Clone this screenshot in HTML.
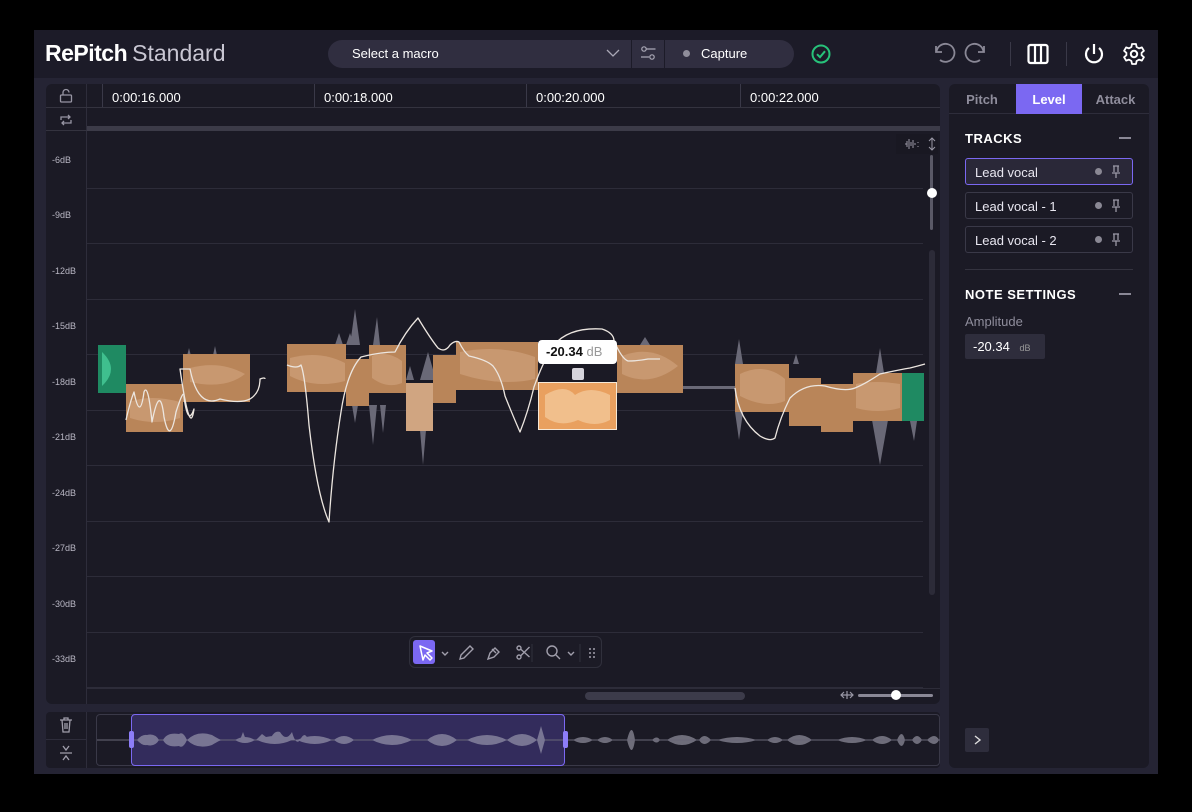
<!DOCTYPE html><html><head><meta charset="utf-8"><style>
*{margin:0;padding:0;box-sizing:border-box}
body{width:1192px;height:812px;background:#000;font-family:"Liberation Sans",sans-serif;position:relative;overflow:hidden;color:#e6e4ee}
.a{position:absolute}
.app{left:34px;top:30px;width:1124px;height:744px;background:#252434}
.t{font-size:13px;color:#fff}
.tab{top:84px;height:30px;font-size:13px;font-weight:bold;display:flex;align-items:center;justify-content:center;color:#8f8d9c}
.trk{left:965px;width:168px;height:27px;border:1px solid #3a3948;border-radius:3px;font-size:13px;color:#e8e6f0;padding:6px 9px;background:#1b1a25}
.dot{position:absolute;right:30px;top:9px;width:7px;height:7px;border-radius:50%;background:#8a8894}
.pin{position:absolute;right:11px;top:6px}
.db{left:52px;font-size:9px;color:#b9b7c4}
</style></head><body>
<div class="a app"></div>
<div class="a" style="left:34px;top:30px;width:1124px;height:48px;background:#1c1b28"></div>
<div class="a" style="left:45px;top:40px;font-size:23px;color:#fff"><b style="letter-spacing:-0.5px">RePitch</b><span style="color:#c9c7d3;font-weight:normal;margin-left:5px">Standard</span></div>
<div class="a" style="left:328px;top:40px;width:466px;height:28px;background:#302e40;border-radius:14px"></div>
<div class="a t" style="left:352px;top:46px">Select a macro</div>
<svg class="a" style="left:606px;top:47px" width="14" height="12"><path d="M1 3l6 6 6-6" stroke="#aaa8b6" fill="none" stroke-width="1.3"/></svg>
<div class="a" style="left:631px;top:40px;width:1px;height:28px;background:#1c1b28"></div>
<div class="a" style="left:664px;top:40px;width:1px;height:28px;background:#1c1b28"></div>
<svg class="a" style="left:640px;top:45px" width="17" height="17"><g stroke="#aaa8b6" fill="none" stroke-width="1.2"><circle cx="4" cy="4" r="2.2"/><path d="M6.5 4h9M1 12h8"/><circle cx="12" cy="12" r="2.2"/></g></svg>
<div class="a" style="left:683px;top:50px;width:7px;height:7px;border-radius:50%;background:#8f8d9a"></div>
<div class="a t" style="left:701px;top:46px">Capture</div>
<svg class="a" style="left:810px;top:43px" width="22" height="22"><circle cx="11" cy="11" r="8.5" stroke="#27c27a" stroke-width="2" fill="none"/><path d="M7 11.2l3 3 5-6" stroke="#27c27a" stroke-width="2" fill="none"/></svg>
<svg class="a" style="left:932px;top:41px" width="60" height="26"><g stroke="#8a8896" stroke-width="1.8" fill="none"><path d="M4 5v6h6"/><path d="M4.5 11A9 9 0 1 1 8 19"/><path d="M52 5v6h-6"/><path d="M51.5 11A9 9 0 1 0 48 19"/></g></svg>
<div class="a" style="left:1010px;top:42px;width:1px;height:24px;background:#3a3948"></div>
<svg class="a" style="left:1026px;top:42px" width="24" height="24"><rect x="2.5" y="3" width="19" height="18" rx="2" stroke="#fff" stroke-width="2.2" fill="none"/><path d="M9 3v18M15 3v18" stroke="#fff" stroke-width="2.2"/></svg>
<div class="a" style="left:1066px;top:42px;width:1px;height:24px;background:#3a3948"></div>
<svg class="a" style="left:1082px;top:42px" width="24" height="24"><path d="M12 2v10" stroke="#fff" stroke-width="2.2"/><path d="M7 6A8 8 0 1 0 17 6" stroke="#fff" stroke-width="2.2" fill="none"/></svg>
<svg class="a" style="left:1122px;top:42px" width="24" height="24"><circle cx="12" cy="12" r="3.2" stroke="#fff" stroke-width="2" fill="none"/><path d="M10 2h4l.6 3 2.4 1.4 2.9-1 2 3.4-2.3 2v2.4l2.3 2-2 3.4-2.9-1-2.4 1.4-.6 3h-4l-.6-3-2.4-1.4-2.9 1-2-3.4 2.3-2v-2.4l-2.3-2 2-3.4 2.9 1L9.4 5z" stroke="#fff" stroke-width="1.8" fill="none" stroke-linejoin="round"/></svg>

<div class="a" style="left:46px;top:84px;width:894px;height:620px;background:#1b1a25;border-radius:6px"></div>
<div class="a" style="left:86px;top:84px;width:1px;height:620px;background:#2e2d3b"></div>
<div class="a" style="left:46px;top:107px;width:894px;height:1px;background:#34333f"></div>
<div class="a" style="left:46px;top:130px;width:894px;height:1px;background:#34333f"></div>
<div class="a" style="left:87px;top:126px;width:853px;height:5px;background:#3c3b48"></div>
<svg class="a" style="left:58px;top:88px" width="16" height="16"><g stroke="#9795a3" stroke-width="1.3" fill="none"><rect x="2.5" y="7" width="11" height="7" rx="1"/><path d="M5 7V4.5a3 3 0 0 1 6 0"/></g></svg>
<svg class="a" style="left:58px;top:112px" width="16" height="16"><g stroke="#9795a3" stroke-width="1.3" fill="none"><path d="M3 8V5h9M10 3l2 2-2 2M13 8v3H4M6 13l-2-2 2-2"/></g></svg>
<div class="a" style="left:102px;top:84px;width:1px;height:23px;background:#3a3948"></div>
<div class="a" style="left:314px;top:84px;width:1px;height:23px;background:#3a3948"></div>
<div class="a" style="left:526px;top:84px;width:1px;height:23px;background:#3a3948"></div>
<div class="a" style="left:740px;top:84px;width:1px;height:23px;background:#3a3948"></div>
<div class="a t" style="left:112px;top:90px">0:00:16.000</div>
<div class="a t" style="left:324px;top:90px">0:00:18.000</div>
<div class="a t" style="left:536px;top:90px">0:00:20.000</div>
<div class="a t" style="left:750px;top:90px">0:00:22.000</div>
<div class="a db" style="top:155px">-6dB</div>
<div class="a db" style="top:210px">-9dB</div>
<div class="a db" style="top:266px">-12dB</div>
<div class="a db" style="top:321px">-15dB</div>
<div class="a db" style="top:377px">-18dB</div>
<div class="a db" style="top:432px">-21dB</div>
<div class="a db" style="top:488px">-24dB</div>
<div class="a db" style="top:543px">-27dB</div>
<div class="a db" style="top:599px">-30dB</div>
<div class="a db" style="top:654px">-33dB</div>
<svg class="a" style="left:87px;top:131px" width="853" height="573">
<g stroke="#2d2c39" stroke-width="1">
<path d="M0 57.5H836M0 112.5H836M0 168.5H836M0 223.5H836M0 279.5H836M0 334.5H836M0 390.5H836M0 445.5H836M0 501.5H836M0 556.5H836"/></g>
<g transform="translate(-87,-131)">
<g fill="#6a6977">
<path d="M186 360l3-12 3 12zM212 360l3-14 3 14z"/>
<path d="M335 345l4-12 4 12zM346 345l4-12 4 12zM350 345l5-36 5 36zM352 405l3 18 3-18zM373 345l4-28 3 28zM406 380l4-14 4 14zM420 430l3 35 3-35zM420 380l8-28 8 28z"/>
<path d="M369 405l4 40 4-40zM380 405l3 28 3-28z"/>
<path d="M735 364l4-25 4 25zM735 412l4 28 4-28z"/>
<path d="M876 373l4-25 4 25zM872 420l8 45 8-45zM910 421l4 20 3-20zM793 364l3-10 3 10z"/>
<path d="M683 386h52v3h-52z"/>
<path d="M640 345l5-8 5 8z"/>
</g>
<g fill="#b98559">
<rect x="126" y="384" width="57" height="48"/>
<rect x="183" y="354" width="67" height="48"/>
<rect x="287" y="344" width="59" height="48"/>
<rect x="346" y="359" width="23" height="47"/>
<rect x="369" y="345" width="37" height="48"/>
<rect x="433" y="355" width="23" height="48"/>
<rect x="456" y="342" width="82" height="48"/>
<rect x="617" y="345" width="66" height="48"/>
<rect x="735" y="364" width="54" height="48"/>
<rect x="789" y="378" width="32" height="48"/>
<rect x="821" y="384" width="32" height="48"/>
<rect x="853" y="373" width="49" height="48"/>
</g>
<rect x="406" y="383" width="27" height="48" fill="#d0a581"/>
<g fill="#d6a884" opacity=".55">
<path d="M130 402q20-8 50 0v16q-25 8-50 0z"/>
<path d="M190 368q30-8 55 6q-20 16-55 8z"/>
<path d="M290 358q30-8 55 5v18q-30 8-55-5z"/>
<path d="M372 356q15-6 30 5v22q-15 6-30-5z"/>
<path d="M460 352q40-8 75 5v22q-35 8-75-5z"/>
<path d="M622 356q30-12 56 10q-28 22-56 8z"/>
<path d="M740 374q25-12 45 5v22q-20 8-45-5z"/>
<path d="M856 384q20-4 44 0v24q-22 6-44 0z"/>
</g>
<rect x="98" y="345" width="28" height="48" fill="#1f8a62"/>
<path d="M102 352q18 17 0 34z" fill="#3fbf8e"/>
<rect x="902" y="373" width="22" height="48" fill="#1f8a62"/>
<rect x="538.5" y="382.5" width="78" height="47" fill="#e9a05f" stroke="#f6e8d6"/>
<path d="M545 395q20-12 30 0q15-10 35 0v25q-15 8-32 0q-18 8-33-3z" fill="#f1bf8c"/>
<rect x="572" y="368" width="12" height="12" rx="2" fill="#d6d4dc"/>
<g fill="none" stroke="#ece6e0" stroke-width="1.3" stroke-linejoin="round">
<path d="M126 420q4-18 8-28q6 30 10 0q4-10 8 30q8-40 12-5q6 30 12-5q8-25 8-15q4 30 10 12q-4 30-14-40q8 0 10 0q8 40 30 30q20 5 30 0q10-6 10-20q5-2 5 0"/>
<path d="M287 365q10 4 14 0q4 10 8 60q8 70 20 97q4-60 12-110q6-40 20-55q20-5 34-5q10-20 23-34q12 20 20 30q7 5 12-3q5-5 9-3q5 10 10 14q18 4 24 10q8 10 12 30q8 20 15 36q8-20 14-45q10-28 20-42q15-18 48-16q12 4 12 12q8 18 14 20q10 0 20-2q10 0 12 0"/>
<path d="M735 388q4 32 25 48q10 6 15 2q5-20 15-40q15-15 35-12q20 6 30 2q10-4 25-14q18-4 30-6q8-2 15-4"/>
</g>
</g>
</svg>
<div class="a" style="left:538px;top:340px;width:79px;height:24px;background:#fff;border-radius:4px;font-size:13px;color:#111;padding:4px 8px"><b>-20.34</b> <span style="color:#999">dB</span></div>
<div class="a" style="left:930px;top:155px;width:3px;height:75px;background:#5a5966;border-radius:2px"></div>
<div class="a" style="left:927px;top:188px;width:10px;height:10px;border-radius:50%;background:#fff"></div>
<div class="a" style="left:929px;top:250px;width:6px;height:345px;background:#2c2b38;border-radius:3px"></div>
<div class="a" style="left:896px;top:134px;width:42px;height:20px;background:#191822"></div>
<svg class="a" style="left:904px;top:137px" width="34" height="14"><g stroke="#9a98a6" stroke-width="1" fill="none"><path d="M1 7h2M3 4v6M5 2v10M7 5v4M9 3v8M11 6v2M14 5v1M14 9v1"/><path d="M28 1v12M25 4l3-3 3 3M25 10l3 3 3-3"/></g></svg>
<div class="a" style="left:409px;top:636px;width:193px;height:32px;background:#1c1b26;border:1px solid #30303c;border-radius:6px"></div>
<div class="a" style="left:413px;top:640px;width:22px;height:24px;background:#7b68f2;border-radius:3px"></div>
<svg class="a" style="left:415px;top:642px" width="185" height="22"><g stroke="#fff" stroke-width="1.5" fill="none"><path d="M5 4l12 5-5 2 5 5-2 2-5-5-2 5z" stroke-linejoin="round"/></g>
<g stroke="#a09eab" stroke-width="1.4" fill="none"><path d="M27 10l3 3 3-3"/><path d="M45 17l1-4 9-9 3 3-9 9z"/><path d="M73 17l2-6 5-5 4 4-5 5z M77 7l4 4"/><circle cx="104" cy="15" r="2"/><circle cx="104" cy="6" r="2"/><path d="M105.5 7l9 8M105.5 14l9-9"/><circle cx="137" cy="9" r="5"/><path d="M141 13l4 4M153 10l3 3 3-3"/></g>
<path d="M117 2v18M165 2v18" stroke="#30303c"/><g fill="#a09eab"><circle cx="175" cy="7" r="1"/><circle cx="179" cy="7" r="1"/><circle cx="175" cy="11" r="1"/><circle cx="179" cy="11" r="1"/><circle cx="175" cy="15" r="1"/><circle cx="179" cy="15" r="1"/></g></svg>
<div class="a" style="left:86px;top:688px;width:854px;height:1px;background:#2d2c39"></div>
<div class="a" style="left:585px;top:692px;width:160px;height:8px;background:#3c3b4a;border-radius:4px"></div>
<svg class="a" style="left:840px;top:690px" width="14" height="10"><g stroke="#9a98a6" stroke-width="1.2" fill="none"><path d="M1 5h12M4 2L1 5l3 3M10 2l3 3-3 3M7 1v8"/></g></svg>
<div class="a" style="left:858px;top:694px;width:75px;height:3px;background:#8a8896;border-radius:2px"></div>
<div class="a" style="left:891px;top:690px;width:10px;height:10px;border-radius:50%;background:#fff"></div>
<div class="a" style="left:46px;top:712px;width:894px;height:56px;background:#1b1a25;border-radius:4px"></div>
<div class="a" style="left:86px;top:712px;width:1px;height:56px;background:#2e2d3b"></div>
<div class="a" style="left:46px;top:739px;width:40px;height:1px;background:#2e2d3b"></div>
<div class="a" style="left:96px;top:714px;width:844px;height:52px;border:1px solid #3a3948;border-radius:4px"></div>
<svg class="a" style="left:59px;top:717px" width="14" height="16"><g stroke="#a09eab" stroke-width="1.3" fill="none"><path d="M1 3h12M5 3V1h4v2M3 3l1 12h6l1-12M6 6v6M8 6v6"/></g></svg>
<svg class="a" style="left:59px;top:745px" width="14" height="16"><g stroke="#a09eab" stroke-width="1.3" fill="none"><path d="M1 8h12M4 1l3 4 3-4M4 15l3-4 3 4"/></g></svg>
<div class="a" style="left:131px;top:714px;width:434px;height:52px;background:#332c5c;border:1.5px solid #7b68f2;border-radius:4px"></div>
<svg class="a" style="left:97px;top:720px" width="843" height="40"><path d="M0 20H843" stroke="#6a6878"/><g fill="#787593">
<path d="M40 20q5-6 10-5q8-2 12 5q-4 7-12 5q-5 1-10-5zM66 20q4-8 16-6q4-3 8 6q-4 9-8 6q-12 2-16-6zM90 20q10-10 25-5q8 5 10 5q-2 0-10 5q-15 5-25-5z"/>
<path d="M138 20h5l3-8 3 8h10l6-6 8 6q4-10 10-8q6 10 12 0q4 14 8 8q5-10 8 0"/>
<path d="M138 20q10-6 20 0q-10 6-20 0zM160 20q18-8 35 0q-17 8-35 0zM200 20q18-8 35 0q-17 8-35 0zM237 20q10-8 20 0q-10 8-20 0zM275 20q20-10 40 0q-20 10-40 0zM330 20q15-12 30 0q-15 12-30 0zM370 20q20-10 40 0q-20 10-40 0zM410 20q15-12 30 0q-15 12-30 0zM440 20l4-14 4 14-4 14z"/></g>
<g fill="#6e6d7a"><path d="M476 20q10-6 20 0q-10 6-20 0zM500 20q8-6 16 0q-8 6-16 0zM530 20q5-20 8 0q-3 20-8 0zM548 20h22M555 20q5-5 8 0q-3 5-8 0zM570 20q15-10 30 0q-15 10-30 0zM602 20q5-8 12 0q-7 8-12 0zM620 20q20-6 40 0q-20 6-40 0zM670 20q8-6 16 0q-8 6-16 0zM690 20q12-10 25 0q-13 10-25 0zM740 20q15-6 30 0q-15 6-30 0zM775 20q10-8 20 0q-10 8-20 0zM800 20q5-12 8 0q-3 12-8 0zM815 20q5-8 10 0q-5 8-10 0zM830 20q8-8 12 0q-4 8-12 0z"/></g><path d="M470 20H843" stroke="#6a6878"/></svg>
<div class="a" style="left:129px;top:731px;width:5px;height:17px;background:#8d7df8;border-radius:2px"></div>
<div class="a" style="left:563px;top:731px;width:5px;height:17px;background:#8d7df8;border-radius:2px"></div>
<div class="a" style="left:949px;top:84px;width:200px;height:684px;background:#1b1a25;border-radius:6px"></div>
<div class="a" style="left:949px;top:113px;width:200px;height:1px;background:#2e2d3b"></div>
<div class="a tab" style="left:949px;width:66px">Pitch</div>
<div class="a tab" style="left:1016px;width:66px;background:#7b68f2;color:#fff">Level</div>
<div class="a tab" style="left:1082px;width:67px">Attack</div>
<div class="a" style="left:965px;top:131px;font-size:13px;font-weight:bold;letter-spacing:.5px;color:#fff">TRACKS</div>
<div class="a" style="left:1119px;top:137px;width:12px;height:1.5px;background:#8a8896"></div>
<div class="a trk" style="top:158px;border-color:#7b68f2;background:#2a2838">Lead vocal<span class="dot"></span><svg class="pin" width="10" height="14"><path d="M2 1h6M3 1v6M7 1v6M1 8h8M5 8v5" stroke="#9b99a6" stroke-width="1.3" fill="none"/></svg></div>
<div class="a trk" style="top:192px">Lead vocal - 1<span class="dot"></span><svg class="pin" width="10" height="14"><path d="M2 1h6M3 1v6M7 1v6M1 8h8M5 8v5" stroke="#9b99a6" stroke-width="1.3" fill="none"/></svg></div>
<div class="a trk" style="top:226px">Lead vocal - 2<span class="dot"></span><svg class="pin" width="10" height="14"><path d="M2 1h6M3 1v6M7 1v6M1 8h8M5 8v5" stroke="#9b99a6" stroke-width="1.3" fill="none"/></svg></div>
<div class="a" style="left:965px;top:269px;width:168px;height:1px;background:#34333f"></div>
<div class="a" style="left:965px;top:287px;font-size:13px;font-weight:bold;letter-spacing:.5px;color:#fff">NOTE SETTINGS</div>
<div class="a" style="left:1119px;top:293px;width:12px;height:1.5px;background:#8a8896"></div>
<div class="a" style="left:965px;top:314px;font-size:13px;color:#8f8d9c">Amplitude</div>
<div class="a" style="left:965px;top:334px;width:80px;height:25px;background:#2e2d3c;border-radius:2px;font-size:13px;color:#fff;padding:5px 8px">-20.34 <span style="font-size:9px;color:#999;margin-left:6px">dB</span></div>
<div class="a" style="left:965px;top:728px;width:24px;height:24px;background:#2e2d3c;border-radius:2px"></div>
<svg class="a" style="left:971px;top:734px" width="12" height="12"><path d="M4 2l5 4-5 4" stroke="#ddd" stroke-width="1.4" fill="none"/></svg>
</body></html>
